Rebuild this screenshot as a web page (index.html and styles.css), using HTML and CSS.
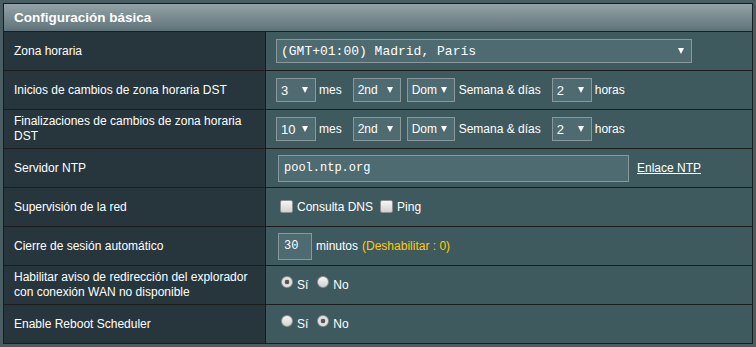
FILE: index.html
```html
<!DOCTYPE html>
<html>
<head>
    <title>Configuración básica</title>
    <link rel="stylesheet" href="styles.css">
</head>
<body>
    <div class="form-table">
        <div class="form-head">Configuración básica</div>

        <div class="form-row">
            <div class="label">Zona horaria</div>
            <div class="field">
                <div class="select select-wide"><span>(GMT+01:00) Madrid, París</span><i class="arrow"></i></div>
            </div>
        </div>

        <div class="form-row">
            <div class="label">Inicios de cambios de zona horaria DST</div>
            <div class="field">
                <div class="select select-num"><span>3</span><i class="arrow"></i></div>
                <span class="unit">mes</span>
                <div class="select select-mid"><span>2nd</span><i class="arrow"></i></div>
                <div class="select select-mid"><span>Dom</span><i class="arrow"></i></div>
                <span class="unit">Semana &amp; días</span>
                <div class="select select-num"><span>2</span><i class="arrow"></i></div>
                <span class="unit">horas</span>
            </div>
        </div>

        <div class="form-row">
            <div class="label">Finalizaciones de cambios de zona horaria DST</div>
            <div class="field">
                <div class="select select-num"><span>10</span><i class="arrow"></i></div>
                <span class="unit">mes</span>
                <div class="select select-mid"><span>2nd</span><i class="arrow"></i></div>
                <div class="select select-mid"><span>Dom</span><i class="arrow"></i></div>
                <span class="unit">Semana &amp; días</span>
                <div class="select select-num"><span>2</span><i class="arrow"></i></div>
                <span class="unit">horas</span>
            </div>
        </div>

        <div class="form-row">
            <div class="label">Servidor NTP</div>
            <div class="field">
                <input class="text-input ntp-input" type="text" value="pool.ntp.org">
                <a class="ntp-link" href="#">Enlace NTP</a>
            </div>
        </div>

        <div class="form-row">
            <div class="label">Supervisión de la red</div>
            <div class="field">
                <label class="check"><input type="checkbox"> Consulta DNS</label>
                <label class="check"><input type="checkbox"> Ping</label>
            </div>
        </div>

        <div class="form-row">
            <div class="label">Cierre de sesión automático</div>
            <div class="field">
                <input class="text-input timeout-input" type="text" value="30">
                <span class="unit">minutos</span>
                <span class="hint">(Deshabilitar : 0)</span>
            </div>
        </div>

        <div class="form-row">
            <div class="label">Habilitar aviso de redirección del explorador con conexión WAN no disponible</div>
            <div class="field">
                <label class="radio"><input type="radio" name="redirect" checked>Sí</label>
                <label class="radio"><input type="radio" name="redirect">No</label>
            </div>
        </div>

        <div class="form-row">
            <div class="label">Enable Reboot Scheduler</div>
            <div class="field">
                <label class="radio"><input type="radio" name="reboot">Sí</label>
                <label class="radio"><input type="radio" name="reboot" checked>No</label>
            </div>
        </div>
    </div>
</body>
</html>
```

FILE: styles.css
```css
* {
    box-sizing: border-box;
}

body {
    margin: 0;
    padding: 3px;
    background-color: #4a5d62;
    font-family: "Liberation Sans", Arial, sans-serif;
    font-size: 12px;
    color: #fff;
}

/* Table frame */
.form-table {
    width: 750px;
    border: 1px solid #1c1c1c;
}

.form-head {
    height: 28px;
    padding-left: 10px;
    display: flex;
    align-items: center;
    border-bottom: 1px solid #1c1c1c;
    background: linear-gradient(#94a3a8, #5e7378);
    font-size: 13.5px;
    font-weight: bold;
}

.form-row {
    display: grid;
    grid-template-columns: 262px 1fr;
    height: 39px;
    border-bottom: 1px solid #1c1c1c;
}

.form-row:last-child {
    height: 38px;
    border-bottom: none;
}

.label {
    padding: 0 10px;
    display: flex;
    align-items: center;
    line-height: 15px;
    background-color: #27363c;
    border-right: 1px solid #1c1c1c;
}

.field {
    padding-left: 10px;
    display: flex;
    align-items: center;
    background-color: #3e5a5f;
}

/* Drop-down boxes */
.select {
    height: 24px;
    display: flex;
    align-items: center;
    justify-content: space-between;
    padding: 0 7px 0 4px;
    background-color: #4d6b71;
    border: 1px solid #8b989b;
    font-size: 13px;
}

.select-wide {
    width: 416px;
    font-family: "Liberation Mono", monospace;
    padding-right: 7px;
}

.select-num {
    width: 40px;
}

.select-mid {
    width: 48px;
    font-size: 12px;
}

.arrow {
    width: 0;
    height: 0;
    border-left: 3px solid transparent;
    border-right: 3px solid transparent;
    border-top: 6px solid #fff;
}

.unit {
    margin: 0 11px 0 3px;
}

.select-mid + .select-mid {
    margin-left: 6px;
}

.select-mid + .select-mid + .unit {
    margin-left: 4px;
}

/* Text boxes */
.text-input {
    height: 27px;
    margin-left: 2px;
    padding: 0 5px;
    background-color: #4d6b71;
    border: 1px solid #8b989b;
    color: #fff;
    font-family: "Liberation Mono", monospace;
    font-size: 12px;
    outline: none;
}

.ntp-input {
    width: 351px;
}

.timeout-input {
    width: 34px;
}

.timeout-input + .unit {
    margin: 0 4px 0 4px;
}

.ntp-link {
    margin-left: 8px;
    color: #fff;
    text-decoration: underline;
}

.hint {
    color: #ffcc00;
}

/* Check boxes and radios */
.check,
.radio {
    display: flex;
    align-items: center;
}

.check input,
.radio input {
    appearance: none;
    -webkit-appearance: none;
    margin: 0 4px 0 0;
    width: 12px;
    height: 12px;
    border: 1px solid #8f8f8f;
    background: linear-gradient(#f6f6f6, #d2d2d2);
    position: relative;
    top: -1px;
}

.check input {
    border-radius: 2px;
    width: 13px;
    height: 13px;
}

.check {
    margin-left: 4px;
    margin-right: 3px;
}

.radio {
    margin-left: 5px;
    margin-right: 4px;
}

.radio input {
    border-radius: 50%;
    top: -3px;
}

.radio input:checked {
    background: radial-gradient(circle, #555 0, #555 2px, #d8d8d8 2.6px, #f2f2f2 6px);
}
```
